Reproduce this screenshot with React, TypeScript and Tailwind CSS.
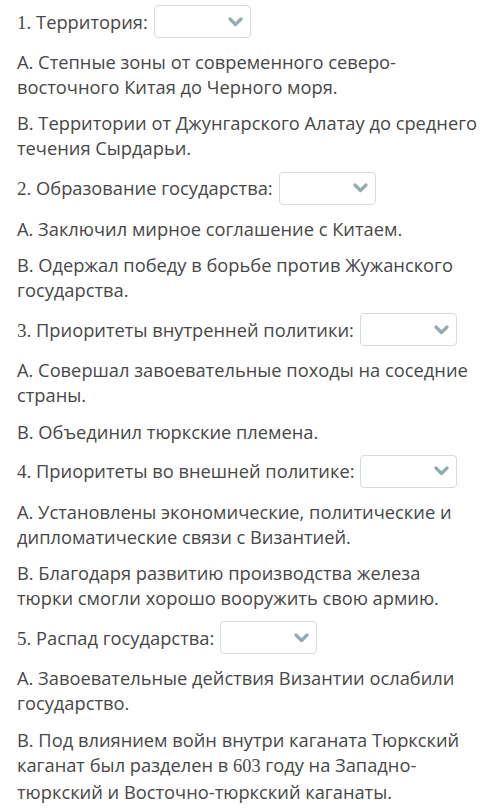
type Question = {
  num: string;
  title: string;
  a: string;
  b: React.ReactNode;
};

const questions: Question[] = [
  {
    num: '1',
    title: 'Территория:',
    a: 'А. Степные зоны от современного северо-восточного Китая до Черного моря.',
    b: 'В. Территории от Джунгарского Алатау до среднего течения Сырдарьи.',
  },
  {
    num: '2',
    title: 'Образование государства:',
    a: 'А. Заключил мирное соглашение с Китаем.',
    b: 'В. Одержал победу в борьбе против Жужанского государства.',
  },
  {
    num: '3',
    title: 'Приоритеты внутренней политики:',
    a: 'А. Совершал завоевательные походы на соседние страны.',
    b: 'В. Объединил тюркские племена.',
  },
  {
    num: '4',
    title: 'Приоритеты во внешней политике:',
    a: 'А. Установлены экономические, политические и дипломатические связи с Византией.',
    b: 'В. Благодаря развитию производства железа тюрки смогли хорошо вооружить свою армию.',
  },
  {
    num: '5',
    title: 'Распад государства:',
    a: 'А. Завоевательные действия Византии ослабили государство.',
    b: (
      <>
        В. Под влиянием войн внутри каганата Тюркский каганат был разделен в{' '}
        <span className="font-['Liberation_Serif',serif] leading-[25px]">603</span> году на Западно-тюркский и
        Восточно-тюркский каганаты.
      </>
    ),
  },
];

function Dropdown() {
  return (
    <div className="flex h-[33px] w-[97px] shrink-0 items-center justify-end rounded-[4px] border border-[#d3dcdf] bg-white pr-[7px]">
      <svg width="15" height="10" viewBox="0 0 15 10" fill="none" className="text-[#93abb1]">
        <polyline
          points="2,2 7.5,7.5 13,2"
          stroke="currentColor"
          strokeWidth="3.2"
          strokeLinecap="round"
          strokeLinejoin="round"
        />
      </svg>
    </div>
  );
}

export default function App() {
  return (
    <div className="min-h-[810px] bg-white pl-[17px] pr-[21px] pt-[5px] font-['Open_Sans',sans-serif] text-[18.3px] leading-[25px] text-[#474747]">
      <div className="flex flex-col gap-[11.2px]">
        {questions.map((q) => (
          <div key={q.num} className="contents">
            <div className="flex items-center gap-[6px]">
              <span>
                <span className="font-['Liberation_Serif',serif] text-[19px]">{q.num}</span>. {q.title}
              </span>
              <Dropdown />
            </div>
            <p>{q.a}</p>
            <p>{q.b}</p>
          </div>
        ))}
      </div>
    </div>
  );
}
